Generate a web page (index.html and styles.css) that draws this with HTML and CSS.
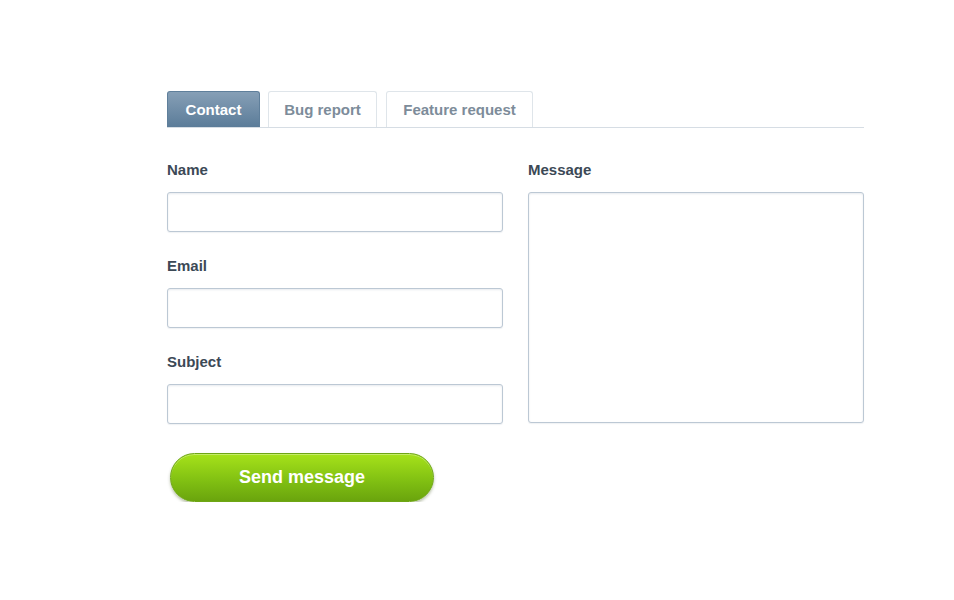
FILE: index.html
```html
<!DOCTYPE html>
<html lang="en">
<head>
    <meta charset="UTF-8">
    <meta name="viewport" content="width=device-width, initial-scale=1.0">
    <title>Contact</title>
    <link rel="stylesheet" href="styles.css">
</head>
<body>
    <div class="wrap">
        <div class="tabs">
            <div class="tab active">Contact</div>
            <div class="tab">Bug report</div>
            <div class="tab">Feature request</div>
        </div>
        <form class="contact-form">
            <div class="columns">
                <div class="col">
                    <div class="form-group">
                        <label for="name">Name</label>
                        <input type="text" id="name">
                    </div>
                    <div class="form-group">
                        <label for="email">Email</label>
                        <input type="text" id="email">
                    </div>
                    <div class="form-group">
                        <label for="subject">Subject</label>
                        <input type="text" id="subject">
                    </div>
                </div>
                <div class="col">
                    <div class="form-group">
                        <label for="message">Message</label>
                        <textarea id="message"></textarea>
                    </div>
                </div>
            </div>
            <button type="button" class="send">Send message</button>
        </form>
    </div>
</body>
</html>
```

FILE: styles.css
```css
body {
    margin: 0;
    background: #fff;
    font-family: "Liberation Sans", Arial, sans-serif;
}
.wrap {
    width: 697px;
    margin-left: 167px;
    padding-top: 91px;
}
.tabs {
    display: flex;
    gap: 8px;
    border-bottom: 1px solid #d6dde4;
}
.tab {
    height: 35px;
    line-height: 36px;
    padding: 0 15px;
    border: 1px solid #dfe5ea;
    border-bottom: none;
    border-radius: 3px 3px 0 0;
    font-size: 15px;
    font-weight: bold;
    color: #7d8c9a;
    background: #fff;
    text-align: center;
}
.tab.active {
    width: 61px;
    color: #fff;
    border-color: #5f7f9b;
    background: linear-gradient(#869fb6, #5b7c99);
}
.tab:nth-child(2) {
    width: 77px;
}
.tab:nth-child(3) {
    width: 115px;
    margin-left: 1px;
}
.contact-form {
    padding-top: 32px;
}
.columns {
    display: flex;
    gap: 25px;
}
.col {
    width: 336px;
}
.form-group {
    margin-bottom: 24px;
}
label {
    display: block;
    height: 18px;
    line-height: 20px;
    margin-bottom: 14px;
    font-size: 15px;
    font-weight: bold;
    color: #3c4956;
}
input[type="text"],
textarea {
    display: block;
    box-sizing: border-box;
    width: 100%;
    height: 40px;
    margin: 0;
    border: 1px solid #bcc8d4;
    border-radius: 3px;
    box-shadow: inset 0 1px 2px rgba(120, 140, 160, 0.18), 0 1px 1px rgba(120, 140, 160, 0.12);
    background: #fff;
}
textarea {
    height: 231px;
    resize: none;
}
.send {
    display: block;
    margin: 5px 0 0 3px;
    width: 264px;
    height: 49px;
    border: 1px solid #6ea615;
    border-radius: 25px;
    background: linear-gradient(#a6e21a, #7fbe12 60%, #6aa40d);
    box-shadow: 0 2px 3px rgba(60, 80, 20, 0.35), inset 0 1px 0 rgba(255, 255, 255, 0.35);
    color: #fff;
    font-family: "Liberation Sans", Arial, sans-serif;
    font-size: 18px;
    font-weight: bold;
    cursor: pointer;
}
```
